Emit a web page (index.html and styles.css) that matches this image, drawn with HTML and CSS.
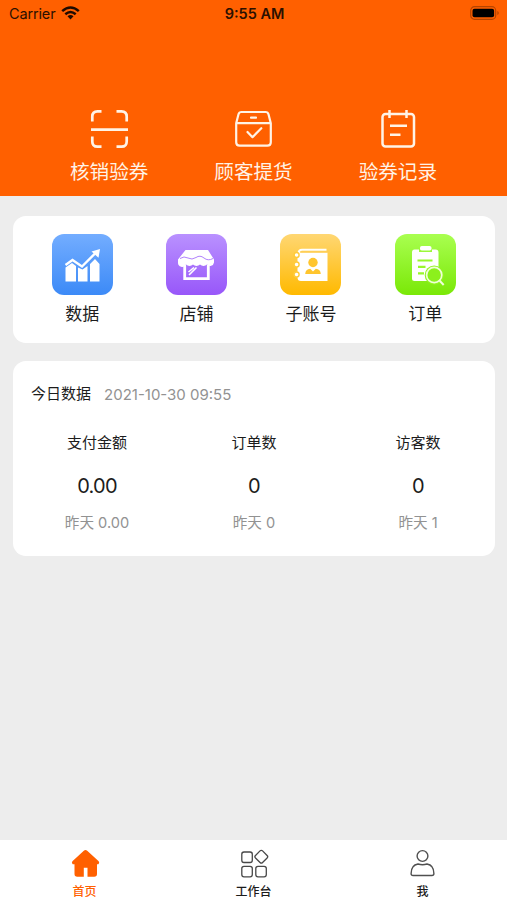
FILE: index.html
```html
<!DOCTYPE html>
<html lang="zh-CN">
<head>
<meta charset="utf-8">
<title>首页</title>
<link rel="stylesheet" href="styles.css">
</head>
<body>
<header class="header">
  <div class="status">
    <div class="carrier">Carrier
      <svg width="19" height="14" viewBox="0 0 19 14"><g fill="none" stroke="#1f0b00" stroke-width="2.5"><path d="M1.2 5.1Q9.5-2.2 17.8 5.1"/><path d="M4.3 8.2Q9.5 3.8 14.7 8.2"/></g><path d="M6.5 10.2Q9.5 7.8 12.5 10.2L9.5 13.5Z" fill="#1f0b00"/></svg>
    </div>
    <div class="time">9:55 AM</div>
    <svg class="battery" width="31" height="14" viewBox="0 0 31 14"><rect x="1.7" y=".7" width="25" height="12.6" rx="3.8" fill="none" stroke="#b54400" stroke-width="1.2"/><rect x="3.5" y="2.8" width="21.6" height="8.4" rx="2" fill="#000"/><path d="M28.3 5v4q1.5-.5 1.5-2t-1.5-2" fill="#b54400"/></svg>
  </div>
  <nav class="actions">
    <div class="action">
      <svg width="40" height="40" viewBox="0 0 40 40" fill="none" stroke="#fff3e6" stroke-width="2.7"><path d="M3.3 12.5V7.5Q3.3 2.3 8.5 2.3H12.5M27.5 2.3h5Q37.7 2.3 37.7 7.500v5M3.300 27.500v5q0 5.200 5.200 5.200h4M27.500 37.700h5q5.200 0 5.200-5.200v-5M2 20.700h37"/></svg>
      <span>核销验券</span>
    </div>
    <div class="action">
      <svg width="40" height="40" viewBox="0 0 40 40" fill="none" stroke="#fff3e6" stroke-width="2.2" stroke-linecap="round" stroke-linejoin="round"><path d="M3.2 14.2 5.500 5.200Q6.100 3 8.500 3H32.500Q34.900 3 35.500 5.200L37.800 14.200V33.200Q37.800 36.700 34.300 36.700H6.700Q3.200 36.700 3.200 33.200ZM3.200 14.200H37.800M18 8.700h5M14.500 23l5 5.200 8.800-9"/></svg>
      <span>顾客提货</span>
    </div>
    <div class="action">
      <svg width="40" height="40" viewBox="0 0 40 40" fill="none" stroke="#fff3e6" stroke-width="2.5"><rect x="4.500" y="5" width="31.500" height="32.500" rx="3"/><path d="M11.500 1v8M28.500 1v8M12 16.700h17M12 25.700h10.500"/></svg>
      <span>验券记录</span>
    </div>
  </nav>
</header>
<main class="main">
  <section class="card shortcuts">
    <div class="shortcut">
      <div class="tile blue"><svg viewBox="0 0 61 61" fill="#fff"><path d="M13.5 33.5 20 29l4 3v15.5H13.5ZM26 33.5l4.500 2 5-3.500v15.500H26ZM38 30l5-5 4.500 5v17.500H38Z"/><path d="m13.500 31 7-5 9.500 6.500L43.500 19" fill="none" stroke="#fff" stroke-width="2.400"/><path d="m48 15-1.500 8.800-7-6.300Z"/></svg></div>
      <span>数据</span>
    </div>
    <div class="shortcut">
      <div class="tile purple"><svg viewBox="0 0 61 61" fill="#fff"><path d="M19.500 16H42l6 9.500v3a4 4 0 0 1-7 2 5 5 0 0 1-7 0 5 5 0 0 1-7 0 5 5 0 0 1-7 0 4.200 4.200 0 0 1-8-2v-3Z"/><path d="M14 24.500q4-2.800 8-.5t8-.5 8 .5 9 .5" fill="none" stroke="#b182fc" stroke-width="1"/><path d="M18.700 31v13.700h23.600V31" fill="none" stroke="#fff" stroke-width="2.800"/><path d="m22.500 38 5.500-4.500M23 41l7.500-7.500" fill="none" stroke="#fff" stroke-width="1.600"/></svg></div>
      <span>店铺</span>
    </div>
    <div class="shortcut">
      <div class="tile yellow"><svg viewBox="0 0 61 61" fill="#fff"><path d="M46.500 14.800H22q-4.500 0-4.500 4.700v24q0 3.500 3.500 3.500h26.500V18.800H20q0-2 2-2h24.500Z"/><path d="M20.500 17.600h26.500" stroke="#ffcf56" stroke-width="1.300"/><g fill="#fff" stroke="#ffcb3c" stroke-width="1.400"><circle cx="16.600" cy="21" r="2.500"/><circle cx="16.600" cy="30.500" r="2.500"/><circle cx="16.600" cy="40.500" r="2.500"/></g><g fill="#ffc52d"><circle cx="33" cy="28.500" r="4.700"/><path d="M25.200 40q.3-4.800 5-5.200l2.800 2.700 2.800-2.700q4.700.4 5 5.200Z"/></g></svg></div>
      <span>子账号</span>
    </div>
    <div class="shortcut">
      <div class="tile green"><svg viewBox="0 0 61 61" fill="#fff"><path d="M19.500 15.500H24V18h13v-2.500h3.500q3 0 3 3v26q0 2.500-2.500 2.500H19.500q-2.500 0-2.500-2.500v-26q0-3 2.500-3Z"/><rect x="25" y="12" width="11.500" height="4.600" rx="1.800"/><path d="M22.500 26.500h15M23 32.800h7.500M23 39.300h6" stroke="#98f72b" stroke-width="2.200"/><circle cx="39.200" cy="41" r="9.500" fill="#93f421"/><circle cx="39.200" cy="41" r="7.600" fill="#8cf01c" stroke="#efffd9" stroke-width="1.700"/><path d="m44.700 46.700 4 4.300" stroke="#efffd9" stroke-width="2"/></svg></div>
      <span>订单</span>
    </div>
  </section>
  <section class="card today">
    <div class="heading"><h2>今日数据</h2><time>2021-10-30 09:55</time></div>
    <div class="stats">
      <div class="stat"><span>支付金额</span><strong>0.00</strong><small>昨天 0.00</small></div>
      <div class="stat"><span>订单数</span><strong>0</strong><small>昨天 0</small></div>
      <div class="stat"><span>访客数</span><strong>0</strong><small>昨天 1</small></div>
    </div>
  </section>
</main>
<nav class="tabs">
  <div class="tab active">
    <svg width="30" height="30" viewBox="0 0 30 30"><path d="M13.800 1.700q1.700-1.400 3.400 0L28.700 12.300q1.200 1.500-.3 2.900h-1.400v9.800q0 2.800-2.800 2.800h-6.700v-9.100h-3.700v9.100H7.300Q4.500 27.800 4.500 25v-9.800H2.700Q1.200 13.800 2.400 12.300Z" fill="#ff6000"/></svg>
    <span>首页</span>
  </div>
  <div class="tab">
    <svg width="30" height="30" viewBox="0 0 30 30" fill="none" stroke="#484848" stroke-width="1.300"><rect x="2.800" y="3" width="10.500" height="10.500" rx="2.200"/><rect x="2.800" y="17.300" width="10.500" height="10.500" rx="2.200"/><rect x="16.800" y="17.300" width="10.500" height="10.500" rx="2.200"/><rect x="17.300" y="2.700" width="10" height="10" rx="1.800" transform="rotate(45 22.300 7.700)"/></svg>
    <span>工作台</span>
  </div>
  <div class="tab">
    <svg width="30" height="30" viewBox="0 0 30 30" fill="none" stroke="#505050" stroke-width="1.400"><circle cx="14.500" cy="7" r="5.400"/><path d="M10 15q4.500 1.500 9 0 6.900 1.200 6.900 9.500 0 2-2 2H5.100q-2 0-2-2 0-8.300 6.900-9.500Z"/></svg>
    <span>我</span>
  </div>
</nav>
</body>
</html>
```

FILE: styles.css
```css
* { box-sizing: border-box; }

body {
  margin: 0;
  height: 900px;
  display: flex;
  flex-direction: column;
  background: #ededed;
  color: #1c1c1c;
  font-family: Inter, "Noto Sans CJK SC", sans-serif;
}

svg { display: block; flex: none; }

.header {
  height: 196px;
  background: #ff6000;
}

.status {
  height: 26px;
  padding: 0 7px 0 9px;
  display: grid;
  grid-template-columns: 1fr auto 1fr;
  align-items: center;
  color: #2b1000;
  font-size: 14.5px;
}

.carrier {
  display: flex;
  align-items: center;
  gap: 6px;
  letter-spacing: -0.15px;
}

.time { font-weight: 600; }
.battery { justify-self: end; }

.actions {
  display: grid;
  grid-template-columns: repeat(3, 1fr);
  padding: 83px 37px 0;
}

.action {
  display: flex;
  flex-direction: column;
  align-items: center;
  gap: 9px;
  color: #fff3e6;
  font-size: 19.6px;
  line-height: 29px;
}

.main {
  flex: 1;
  padding: 20px 12.5px 0 13px;
}

.card {
  background: #fff;
  border-radius: 13px;
}

.shortcuts {
  height: 127px;
  display: grid;
  grid-template-columns: repeat(4, 1fr);
  padding: 18px 12px 0;
}

.shortcut {
  display: flex;
  flex-direction: column;
  align-items: center;
  gap: 7px;
  font-size: 17px;
  line-height: 25px;
}

.tile {
  width: 61px;
  height: 61px;
  border-radius: 12px;
}

.blue { background: linear-gradient(#73adff, #3c8af7); }
.purple { background: linear-gradient(#b991ff, #9857f9); }
.yellow { background: linear-gradient(#ffd773, #ffb900); }
.green { background: linear-gradient(#a9ff50, #7ae807); }

.today {
  height: 195px;
  margin-top: 18px;
  padding-top: 22px;
}

.heading {
  display: flex;
  align-items: center;
  gap: 13px;
  padding-left: 18px;
  height: 22px;
}

h2 {
  margin: 0;
  font-size: 15px;
  line-height: 20px;
  font-weight: 400;
}

time {
  color: #929292;
  font-size: 15px;
}

.stats {
  display: grid;
  grid-template-columns: 157px 164px 80px;
  padding: 27px 0 0 44px;
}

.stat {
  width: 80px;
  display: flex;
  flex-direction: column;
  align-items: center;
  white-space: nowrap;
  font-size: 15px;
  line-height: 22px;
}

.stat strong {
  margin-top: 18px;
  font-size: 20px;
  line-height: 28px;
  font-weight: 400;
  letter-spacing: -0.8px;
}

.stat small {
  margin-top: 12px;
  color: #929292;
  font-size: 14.6px;
}

.tabs {
  height: 60px;
  display: grid;
  grid-template-columns: repeat(3, 1fr);
  padding-top: 9px;
  background: #fff;
}

.tab {
  display: flex;
  flex-direction: column;
  align-items: center;
  gap: 4px;
  font-size: 12px;
  font-weight: 500;
  line-height: 18px;
}

.active { color: #ff6000; }
```
